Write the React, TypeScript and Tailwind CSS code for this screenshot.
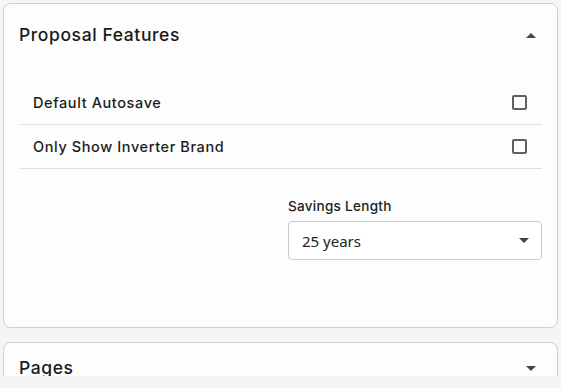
const font = { fontFamily: "Inter, 'Noto Sans', sans-serif" };

function Caret({ up }: { up?: boolean }) {
  return (
    <svg width="10" height="5" viewBox="0 0 10 5" className="text-[#444]">
      <path d={up ? "M0 5 L5 0 L10 5 Z" : "M0 0 L5 5 L10 0 Z"} fill="currentColor" />
    </svg>
  );
}

function CheckRow({ label }: { label: string }) {
  return (
    <div className="flex h-[44px] items-center justify-between border-b border-[#e0e0e0] pl-[14px] pr-[15px]">
      <span className="text-[14.5px] font-medium tracking-[0.6px] text-[#1c1c1c]">{label}</span>
      <span className="h-[15px] w-[15px] rounded-[2px] border-2 border-[#5f5f5f]" />
    </div>
  );
}

export default function App() {
  return (
    <div className="h-[388px] w-[561px] bg-[#f6f5f5]" style={font}>
      <div className="flex h-[376px] flex-col gap-[14px] overflow-hidden px-[3px] pt-[3px]">
        <section className="flex h-[325px] shrink-0 flex-col rounded-[8px] border border-[#cfcfcf] bg-[#fdfdfd] px-[15px]">
          <div className="flex h-[62px] items-center justify-between pr-[6px]">
            <h3 className="text-[17.5px] font-medium tracking-[0.6px] text-[#1a1a1a]">Proposal Features</h3>
            <Caret up />
          </div>
          <div className="mt-[15px]">
            <CheckRow label="Default Autosave" />
            <CheckRow label="Only Show Inverter Brand" />
          </div>
          <div className="mt-[27px] ml-[269px] flex flex-col">
            <span className="text-[13.5px] font-medium tracking-[0.3px] text-[#1c1c1c]">Savings Length</span>
            <div className="mt-[5px] flex h-[39px] items-center justify-between rounded-[4px] border border-[#cbcbcb] bg-white pl-[13px] pr-[12px]">
              <span className="text-[15px] text-[#222]" style={{ fontFamily: "'Noto Sans', sans-serif" }}>25 years</span>
              <Caret />
            </div>
          </div>
        </section>
        <section className="flex h-[80px] shrink-0 flex-col rounded-[8px] border border-[#cfcfcf] bg-[#fdfdfd] px-[15px]">
          <div className="flex h-[50px] items-center justify-between pr-[6px]">
            <h3 className="text-[17.5px] font-medium tracking-[0.6px] text-[#1a1a1a]">Pages</h3>
            <Caret />
          </div>
        </section>
      </div>
    </div>
  );
}
